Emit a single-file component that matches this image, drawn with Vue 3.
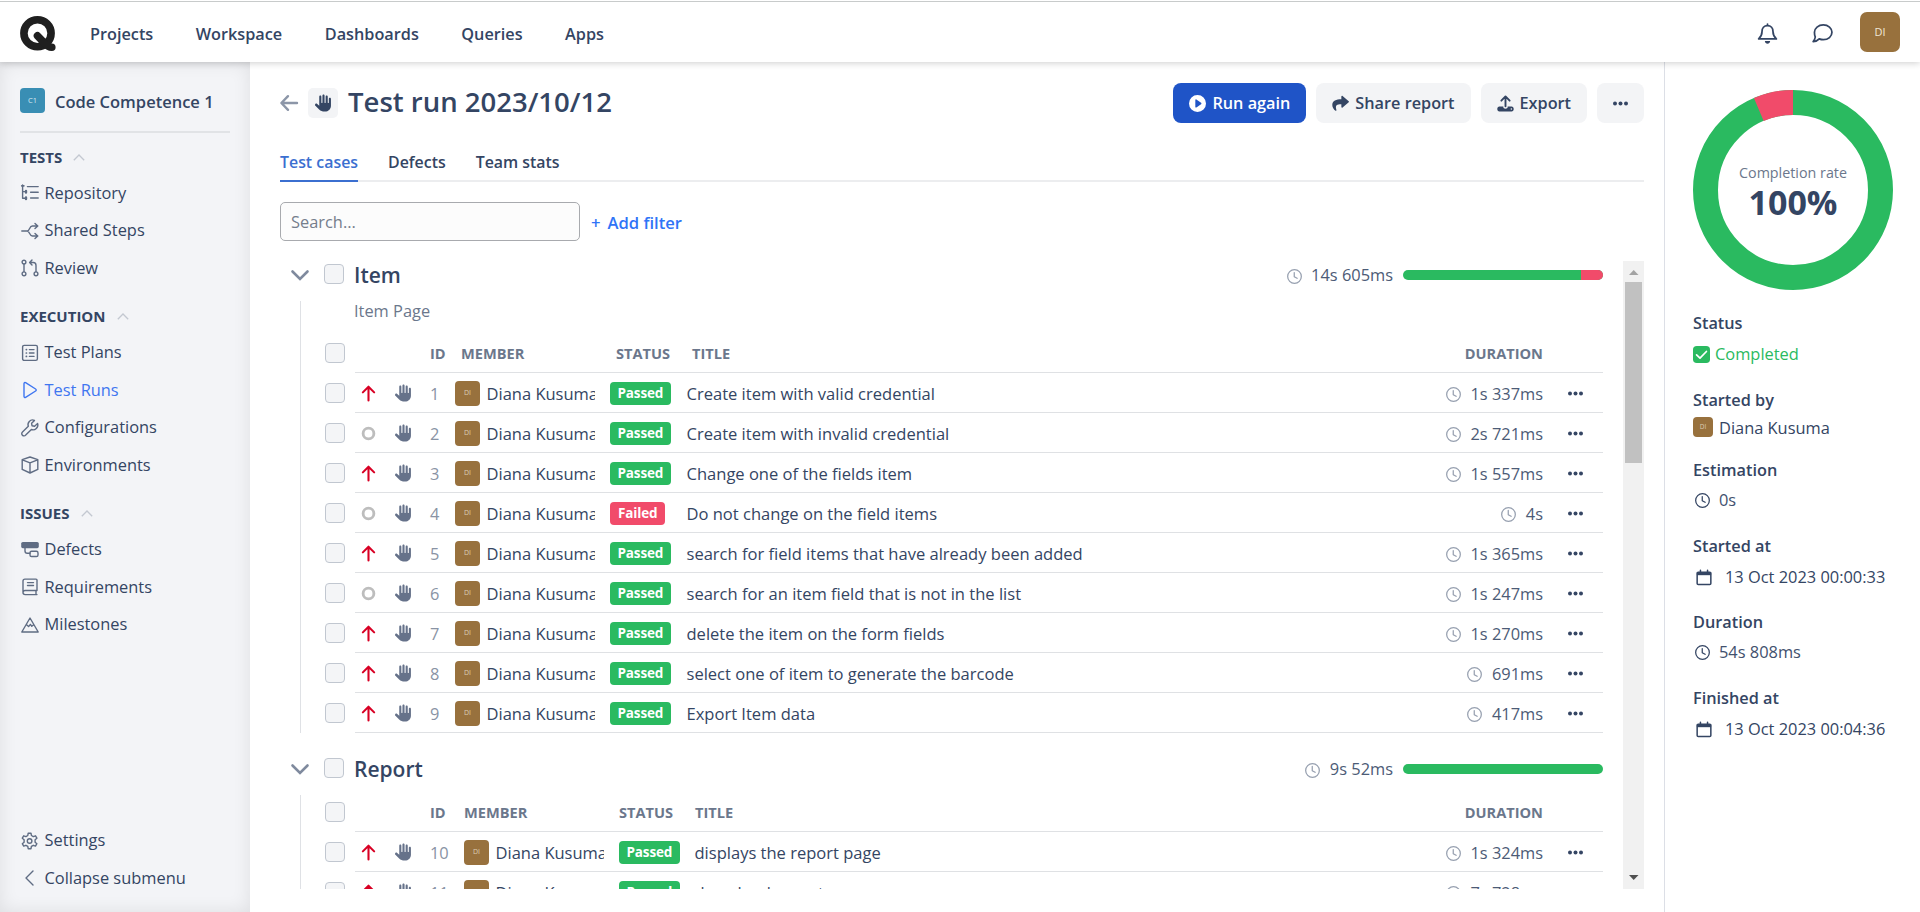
<script setup>
import { h } from 'vue'

const HAND = 'M288 32c0-17.7-14.3-32-32-32s-32 14.3-32 32V240c0 8.8-7.2 16-16 16s-16-7.2-16-16V64c0-17.7-14.3-32-32-32s-32 14.3-32 32V336c0 1.5 0 3.1 .1 4.6L67.6 283c-16-15.2-41.3-14.6-56.6 1.4s-14.6 41.3 1.4 56.6L124.8 448c43.1 41.1 100.4 64 160 64H304c97.2 0 176-78.8 176-176V128c0-17.7-14.3-32-32-32s-32 14.3-32 32V240c0 8.8-7.2 16-16 16s-16-7.2-16-16V64c0-17.7-14.3-32-32-32s-32 14.3-32 32V240c0 8.8-7.2 16-16 16s-16-7.2-16-16V32z'

const line = { fill: 'none', stroke: 'currentColor', 'stroke-width': 1.4, 'stroke-linecap': 'round', 'stroke-linejoin': 'round' }
const p = (d, extra = {}) => h('path', { d, ...line, ...extra })
const solid = (d) => h('path', { d, fill: 'currentColor' })

// Every glyph is drawn on an 18x18 grid.
const glyphs = {
  repository: () => [p('M1.6 1v13.2h3M1.6 7.6h3M6.4 2.6h10.8M9.6 8.3h7.6M9.6 14h7.6'), p('M5 7v1.6M5 13.4v1.6', { 'stroke-width': 2.4 }), p('M.8 1.8h2', { 'stroke-width': 1.8 })],
  shared: () => [p('M.8 9h5.4M6.2 9c2.6 0 2-5 5.2-5h5M6.2 9c2.6 0 2 5 5.2 5h5M14 1.4 16.8 4 14 6.6M14 11.4l2.8 2.6-2.8 2.6')],
  review: () => [p('M3 5.2v7.6M15 12.8V6.4c0-1.800-.9-2.900-2.700-2.900H9M11 1 8.600 3.500 11 6'), h('circle', { cx: 3, cy: 3.1, r: 1.9, ...line }), h('circle', { cx: 3, cy: 14.8, r: 1.9, ...line }), h('circle', { cx: 15, cy: 14.8, r: 1.9, ...line })],
  plans: () => [h('rect', { x: 1.6, y: 1.4, width: 14.8, height: 15, rx: 1.6, ...line }), p('M8.4 5.6h4.6M8.4 9h4.6M8.4 12.4h4.6'), p('M5.3 5.6h.2M5.3 9h.2M5.3 12.4h.2', { 'stroke-width': 1.7 })],
  runs: () => [p('M3 2.7v12.6c0 1 .8 1.4 1.6 1l10-6.3c.8-.5.8-1.5 0-2l-10-6.3C3.800 1.300 3 1.700 3 2.700z')],
  wrench: () => [p('M16.600 4.400 13.600 7.200 11 6.700 10.600 4.300 13.500 1.400C11.700.6 9.600 1 8.300 2.400 7 3.800 6.700 5.700 7.300 7.300L1.500 12.900c-1 1-1 2.400-.1 3.300.9.9 2.400.9 3.300-.1l5.700-5.600c1.600.7 3.500.3 4.900-1.100 1.300-1.300 1.900-3.300 1.300-5z')],
  box: () => [p('M9 1 16.800 3.600v9.800L9 17 1.200 13.400V3.600zM1.400 3.800 9 6.800l7.600-3M9 6.800V17')],
  defects: () => [h('rect', { x: .2, y: 1, width: 17.600, height: 6.200, rx: 1.600, fill: 'currentColor' }), p('M4 7v3c0 1.500.8 2.300 2.300 2.300H9'), h('rect', { x: 9, y: 10.300, width: 8, height: 5.200, rx: 1.600, ...line })],
  book: () => [p('M16 12.500H4.200c-1.300 0-2.200.9-2.200 2.100V3c0-1.100.9-1.900 2-1.900h11c.6 0 1 .4 1 1zM2 14.600c0 1.200.9 2 2.200 2H16M15 12.600v3.900M6.500 4.600h6M6.500 7.500h6')],
  peak: () => [p('M9 2 17.200 16H.8zM5.600 8.800l2 1.800L9.400 8.400l1.400 1.800 1.600-1.200')],
  gear: () => [p('M7.200 3.300 7.600 1h2.800l.4 2.300 1.900 1.100 2.200-.8 1.400 2.400-1.800 1.500v2.500l1.800 1.500-1.400 2.400-2.200-.8-1.900 1.100-.4 2.300H7.600l-.4-2.300-1.900-1.100-2.200.8-1.400-2.400L3.500 10V7.500L1.700 6l1.400-2.400 2.200.8z', { transform: 'translate(-.4 .2)' }), h('circle', { cx: 8.6, cy: 9, r: 2.300, ...line })],
  left: () => [p('M12 2 5 9l7 7')],
  clock: () => [h('circle', { cx: 9, cy: 9, r: 8.2, ...line, 'stroke-width': 1.5 }), p('M8.700 4.200V9.200l3.400 2', { 'stroke-width': 1.5 })],
  calendar: () => [h('rect', { x: 1.300, y: 3, width: 15.400, height: 14, rx: 1.200, ...line, 'stroke-width': 1.700 }), solid('M1 2.800h16v3.600H1z'), p('M5 .8v2.500M13 .8v2.500', { 'stroke-width': 1.700 })],
  hand: () => [h('g', { transform: 'scale(.03516)' }, solid(HAND))],
  up: () => [p('M9 16.500V2M3 7.800 9 1.800l6 6', { 'stroke-width': 2.200 })],
  ring: () => [h('circle', { cx: 9, cy: 9, r: 5.700, ...line, 'stroke-width': 3 })],
  dots: () => [h('circle', { cx: 2.400, cy: 9, r: 2.400, fill: 'currentColor' }), h('circle', { cx: 9, cy: 9, r: 2.400, fill: 'currentColor' }), h('circle', { cx: 15.600, cy: 9, r: 2.400, fill: 'currentColor' })],
  play: () => [h('path', { d: 'M9 0a9 9 0 1 0 0 18A9 9 0 0 0 9 0zM6.700 5.300c0-.6.6-.9 1.100-.6l5 3.500c.5.4.5 1.100 0 1.500l-5 3.500c-.5.300-1.100 0-1.100-.6z', fill: 'currentColor', 'fill-rule': 'evenodd' })],
  share: () => [solid('M11.200 1.100 17.700 6.600c.4.4.4.9 0 1.200L11.200 13.300c-.5.5-1.300.1-1.300-.6V9.900C5.200 9.900 3.100 11 4.700 15.900c.2.600-.5 1-1 .7C1.900 15.300.300 13 .300 10.500.300 5.800 4.500 4.500 9.900 4.400V1.700c0-.7.800-1.100 1.300-.6z')],
  export: () => [p('M9 12V2M4.600 6 9 1.500 13.400 6', { 'stroke-width': 2 }), h('path', { d: 'M2.500 12.300H6.700v.5c0 1 1 1.700 2.300 1.700s2.300-.7 2.300-1.700v-.5h4.200c1.300 0 2.200 1.100 2.200 2.600s-.9 2.500-2.200 2.500h-13C1.200 17.400.300 16.400.300 14.900s.9-2.600 2.200-2.600zM15.200 14.100a.8.800 0 1 0 0 1.600.8.800 0 0 0 0-1.600z', fill: 'currentColor', 'fill-rule': 'evenodd' })],
  back: () => [p('M17 9H2M8 2.200 1.400 9 8 15.800', { 'stroke-width': 2.400 })],
  check: () => [h('rect', { width: 18, height: 18, rx: 4, fill: 'currentColor' }), p('M3.800 9.300l3.600 3.500 6.800-7', { stroke: '#fff', 'stroke-width': 1.800 })],
  bell: () => [p('M9 2.300c-3 0-4.700 2.200-4.700 5 0 3.300-.8 4.500-2.900 6.400h15.200c-2.100-1.900-2.900-3.100-2.900-6.400 0-2.800-1.700-5-4.700-5zM9 .9v1.300', { 'stroke-width': 1.500 }), solid('M6.700 15.400h4.600c-.2 1.500-1.100 2.300-2.300 2.300s-2.100-.8-2.300-2.300z')],
  chat: () => [p('M9.700 1.700c4.200 0 7.400 2.800 7.400 6.300s-3.200 6.300-7.400 6.300c-1.300 0-2.500-.3-3.500-.7C5 14.900 3 15.900 1 15.900c.9-1 1.600-2.200 1.800-3.900C2.200 10.900 2.100 9.500 2.100 8c0-3.500 3.400-6.300 7.600-6.300z', { 'stroke-width': 1.500 })],
}
const Icon = (props) => h('svg', { viewBox: '0 0 18 18', 'aria-hidden': 'true' }, glyphs[props.name]())
Icon.props = ['name']

const nav = ['Projects', 'Workspace', 'Dashboards', 'Queries', 'Apps']
const menu = [
  { title: 'Tests', items: [['repository', 'Repository'], ['shared', 'Shared Steps'], ['review', 'Review']] },
  { title: 'Execution', items: [['plans', 'Test Plans'], ['runs', 'Test Runs'], ['wrench', 'Configurations'], ['box', 'Environments']] },
  { title: 'Issues', items: [['defects', 'Defects'], ['book', 'Requirements'], ['peak', 'Milestones']] },
]
const suites = [
  {
    name: 'Item', note: 'Item Page', time: '14s 605ms', failed: 1, total: 9,
    rows: [
      [1, 'Create item with valid credential', '1s 337ms', true],
      [2, 'Create item with invalid credential', '2s 721ms', false],
      [3, 'Change one of the fields item', '1s 557ms', true],
      [4, 'Do not change on the field items', '4s', false, 'Failed'],
      [5, 'search for field items that have already been added', '1s 365ms', true],
      [6, 'search for an item field that is not in the list', '1s 247ms', false],
      [7, 'delete the item on the form fields', '1s 270ms', true],
      [8, 'select one of item to generate the barcode', '691ms', true],
      [9, 'Export Item data', '417ms', true],
    ],
  },
  {
    name: 'Report', note: '', time: '9s 52ms', failed: 0, total: 7, wide: true,
    rows: [
      [10, 'displays the report page', '1s 324ms', true],
      [11, 'download report', '7s 728ms', true],
    ],
  },
]
</script>

<template>
  <div class="page">
    <header class="top">
      <svg class="logo" viewBox="0 0 36 36">
        <ellipse cx="17.500" cy="17.200" rx="13.600" ry="13.500" fill="none" stroke="#1f1f1f" stroke-width="7.600" />
        <path d="M17.500 19.800 24 26.500Q28 31.200 31.800 31.200" fill="none" stroke="#1f1f1f" stroke-width="7.600" stroke-linecap="round" />
      </svg>
      <nav class="nav"><a v-for="n in nav" :key="n">{{ n }}</a></nav>
      <Icon name="bell" class="bell" />
      <Icon name="chat" class="chat" />
      <span class="me">DI</span>
    </header>

    <div class="body">
      <aside class="side">
        <div class="project"><span class="badge-c">C1</span><span class="pname">Code Competence 1</span></div>
        <div class="rule"></div>
        <section v-for="g in menu" :key="g.title" class="group">
          <h3>{{ g.title }}<svg class="caret" viewBox="0 0 12 7"><path d="M.8 6.300 6 1l5.200 5.300" fill="none" stroke="#c3c8d1" stroke-width="1.300" /></svg></h3>
          <a v-for="i in g.items" :key="i[1]" :class="['item', { on: i[0] === 'runs' }]"><Icon :name="i[0]" class="mi" />{{ i[1] }}</a>
        </section>
        <div class="foot">
          <a class="item"><Icon name="gear" class="mi" />Settings</a>
          <a class="item"><Icon name="left" class="mi" />Collapse submenu</a>
        </div>
      </aside>

      <main class="main">
        <div class="head">
          <Icon name="back" class="back" />
          <span class="kind"><Icon name="hand" class="hand" /></span>
          <h1>Test run 2023/10/12</h1>
          <div class="actions">
            <button class="btn primary"><Icon name="play" />Run again</button>
            <button class="btn"><Icon name="share" />Share report</button>
            <button class="btn"><Icon name="export" />Export</button>
            <button class="btn more"><Icon name="dots" /></button>
          </div>
        </div>
        <div class="tabs"><a class="on">Test cases</a><a>Defects</a><a>Team stats</a></div>
        <div class="filter">
          <div class="search">Search...</div>
          <a class="add"><span>+</span>Add filter</a>
        </div>

        <div class="scroll">
          <div class="list">
            <section v-for="s in suites" :key="s.name" :class="['suite', { wide: s.wide }]">
              <div class="shead">
                <svg class="chev" viewBox="0 0 18 11"><path d="M1.500 1.500 9 9l7.500-7.500" fill="none" stroke="#7f8a9e" stroke-width="2.600" stroke-linecap="round" /></svg>
                <span class="cb"></span>
                <h2>{{ s.name }}</h2>
                <span class="time"><Icon name="clock" class="clock" />{{ s.time }}</span>
                <span class="bar"><i :style="{ width: (s.failed / s.total) * 100 + '%' }"></i></span>
              </div>
              <div class="tree">
                <p v-if="s.note" class="note">{{ s.note }}</p>
                <div class="row cols">
                  <span class="cb"></span>
                  <div class="line"><span class="hid">ID</span><span class="hmem">Member</span><span class="hst">Status</span><span class="htitle">Title</span><span>Duration</span></div>
                </div>
                <div v-for="r in s.rows" :key="r[0]" class="row">
                  <span class="cb"></span>
                  <div class="line">
                    <span class="prio"><Icon :name="r[3] ? 'up' : 'ring'" :class="r[3] ? 'high' : 'none'" /></span>
                    <span class="auto"><Icon name="hand" class="hand" /></span>
                    <span class="id">{{ r[0] }}</span>
                    <span class="ava">DI</span>
                    <span class="who">Diana Kusuma</span>
                    <span class="st"><b :class="{ bad: r[4] }">{{ r[4] || 'Passed' }}</b></span>
                    <span class="title">{{ r[1] }}</span>
                    <span class="time"><Icon name="clock" class="clock" />{{ r[2] }}</span>
                    <Icon name="dots" class="dots" />
                  </div>
                </div>
              </div>
            </section>
          </div>
          <div class="sb">
            <svg viewBox="0 0 21 21"><path d="M6 14h9.500L10.700 9z" fill="#a3a3a3" /></svg>
            <div class="thumb"></div>
            <svg viewBox="0 0 21 21"><path d="M6 7h9.500l-4.800 5z" fill="#505050" /></svg>
          </div>
        </div>
      </main>

      <aside class="info">
        <div class="donut">
          <svg viewBox="0 0 200 200">
            <circle cx="100" cy="100" r="87.500" fill="none" stroke="#2aba60" stroke-width="25" />
            <path d="M65.800 19.460A87.500 87.500 0 0 1 100 12.500" fill="none" stroke="#f14b6a" stroke-width="25" />
          </svg>
          <div class="rate"><span>Completion rate</span><strong>100%</strong></div>
        </div>
        <dl>
          <dt>Status</dt>
          <dd class="done"><Icon name="check" class="ic17" />Completed</dd>
          <dt>Started by</dt>
          <dd class="by"><span class="ava sm">DI</span>Diana Kusuma</dd>
          <dt>Estimation</dt>
          <dd class="dur"><Icon name="clock" class="clock" />0s</dd>
          <dt>Started at</dt>
          <dd class="cal"><Icon name="calendar" class="ic17" />13 Oct 2023 00:00:33</dd>
          <dt>Duration</dt>
          <dd class="dur"><Icon name="clock" class="clock" />54s 808ms</dd>
          <dt>Finished at</dt>
          <dd class="cal"><Icon name="calendar" class="ic17" />13 Oct 2023 00:04:36</dd>
        </dl>
      </aside>
    </div>
  </div>
</template>

<style>
body { background: #fff; overflow: hidden; }
</style>

<style scoped>
.page { height: 912px; display: flex; flex-direction: column; box-sizing: border-box; font: 400 16.4px/1.4 "Open Sans", "Noto Sans", sans-serif; color: #344563; white-space: nowrap; }
.page * { box-sizing: border-box; }
svg { display: block; flex: none; overflow: visible; }
h1, h2, h3, p, dl, dd { margin: 0; }

.top { height: 62px; flex: none; display: flex; align-items: center; padding: 4px 20px 0; border-top: 1px solid #fff; position: relative; z-index: 2; background: #fff; box-shadow: inset 0 1px 0 #c8cbcb, 0 1px 7px rgba(0, 0, 0, .2); }
.logo { width: 36px; height: 36px; }
.nav { display: flex; gap: 42.500px; margin-left: 34px; flex: 1; font-weight: 600; font-size: 16.250px; padding-top: 1px; }
.bell { width: 21px; height: 21px; margin-right: 34px; }
.chat { width: 21px; height: 21px; margin-right: 27px; }
.me { width: 40px; height: 40px; border-radius: 7px; background: #98713d; color: #f0e6d6; font-size: 11px; display: flex; align-items: center; justify-content: center; margin-top: -3px; }

.body { flex: 1; display: flex; min-height: 0; }
.side { width: 250px; flex: none; background: #f3f4f7; box-shadow: inset 0 0 18px rgba(0, 0, 0, .09); padding: 26px 20px 15px; display: flex; flex-direction: column; }
.project { height: 25px; display: flex; align-items: center; font-size: 16.500px; font-weight: 600; }
.pname { padding-top: 2px; }
.badge-c { width: 25px; height: 25px; margin-right: 10px; border-radius: 4px; background: #398eb4; color: #d4e8f0; font-size: 7.500px; font-weight: 400; display: flex; align-items: center; justify-content: center; }
.rule { height: 2px; background: #e1e3e6; margin: 18px 0 7px; }
.group { margin-bottom: 12.400px; }
h3 { height: 34.500px; margin-bottom: -.4px; display: flex; align-items: center; font-size: 15px; line-height: 1.4; font-weight: 700; text-transform: uppercase; }
h3 + .item { margin-top: .2px; }
.caret { width: 12px; height: 7px; margin-left: 11px; }
.item { height: 37.600px; display: flex; align-items: center; }
.mi { width: 18px; height: 18px; margin: 0 6px 0 .5px; color: #5f6c83; }
.item.on, .item.on .mi { color: #3f76f0; }
.foot { margin-top: auto; }

.main { flex: 1; padding: 21px 20px 23px 30px; display: flex; flex-direction: column; min-width: 0; }
.head { display: flex; align-items: center; height: 40px; }
.back { width: 18px; height: 18px; color: #8c96a8; margin-top: -1px; }
.kind { width: 30px; height: 30px; margin-left: 10px; border-radius: 5px; background: #f3f4f6; display: flex; align-items: center; justify-content: center; }
.hand { width: 17px; height: 18px; }
h1 { font-size: 27.500px; line-height: 1.3; font-weight: 600; margin: -3px 0 0 10px; }
.actions { margin-left: auto; display: flex; gap: 10px; }
.btn { height: 40px; border: 0; border-radius: 8px; background: #f3f4f6; color: #344563; font: 600 16.250px/1.4 "Open Sans", "Noto Sans", sans-serif; padding: 1px 16px 0; display: flex; align-items: center; gap: 6px; }
.btn svg { width: 17px; height: 17px; }
.btn.primary { background: #1f54c7; color: #fff; }
.btn.more svg { width: 15px; }
.tabs { display: flex; gap: 30px; height: 39px; margin-top: 20px; border-bottom: 2px solid #ecedef; font-weight: 600; font-size: 15.900px; }
.tabs a { height: 39px; line-height: 38px; border-bottom: 2px solid transparent; }
.tabs .on { color: #3b6fd0; border-color: #3b6fd0; }
.filter { display: flex; align-items: center; margin-top: 20px; }
.search { width: 300px; height: 39px; border: 1px solid #a8aaae; border-radius: 5px; background: #fcfcfc; padding-left: 10px; line-height: 37px; color: #757e8c; }
.add { margin-left: 11px; padding-top: 3px; color: #2f74f7; font-weight: 600; font-size: 16.600px; display: flex; gap: 7px; }

.scroll { margin-top: 20px; height: 628px; overflow: hidden; display: flex; }
.list { flex: 1; margin-right: 20px; }
.suite { margin-bottom: 22px; }
.shead { height: 40px; display: flex; align-items: center; padding: 0 0 14px 11px; }
.chev { width: 18px; height: 11px; margin-right: 15px; margin-top: 2px; }
.cb { width: 20px; height: 20px; border: 1px solid #c1c7d0; border-radius: 4px; background: #f4f5f7; flex: none; }
h2 { font-size: 21px; line-height: 26px; font-weight: 600; margin: 1px 0 0 10px; }
.time { display: flex; align-items: center; color: #4c5b76; margin-left: auto; }
.shead .time { padding-top: 3px; }
.clock { width: 15px; height: 15px; margin: 1px 9.500px 0 0; color: #97a0b0; }
.bar { width: 200px; height: 10px; border-radius: 5px; margin-left: 10px; background: #2aba60; overflow: hidden; display: flex; justify-content: flex-end; margin-top: 1px; }
.bar i { background: #f14b6a; }
.tree { margin-left: 20px; border-left: 1px solid #dfe1e5; }
.note { height: 32px; line-height: 16px; padding: 2px 0 0 53px; color: #6b778c; }
.row { height: 40px; display: flex; padding-left: 24px; }
.row .cb { margin-top: 10px; }
.row .line { flex: 1; margin-left: 10px; border-bottom: 1px solid #dfe1e4; display: flex; align-items: center; }
.row.cols .line { font-size: 14.600px; font-weight: 700; color: #6b778c; text-transform: uppercase; padding: 2px 60px 0 75px; }
.hid { width: 31px; }
.hmem { width: 155px; }
.hst { width: 76px; }
.htitle { flex: 1; }
.wide .hid { width: 34px; }
.wide .cols { height: 37px; }
.wide .cols .cb { margin-top: 7px; }
.wide .row.cols .line { padding-top: 0; padding-bottom: 1px; }
.prio { width: 27px; display: flex; justify-content: center; }
.prio svg { width: 17px; height: 17px; margin-top: 1px; }
.high { color: #d80024; }
.none { color: #bdbdbd; }
.auto { width: 43px; display: flex; justify-content: center; color: #66728a; padding-top: 1px; }
.id { width: 25px; margin-left: 5px; color: #8993a4; padding-top: 3px; }
.wide .id { width: 34px; }
.ava { width: 25px; height: 25px; border-radius: 4px; background: #98713d; color: #dccdb4; font-size: 7px; display: flex; align-items: center; justify-content: center; flex: none; margin-top: 1px; }
.sm { width: 20px; height: 20px; font-size: 6.500px; }
.who { width: 108.500px; margin: 0 15px 0 6.500px; overflow: hidden; font-size: 16.500px; line-height: 26px; padding-top: 3px; }
.st { width: 77px; padding-top: 2px; display: flex; }
.wide .st { width: 76px; }
.st b { height: 23px; line-height: 23.500px; padding: 0 7.500px; border-radius: 4px; background: #2aba60; color: #fff; font-size: 13.500px; font-weight: 700; letter-spacing: -.15px; }
.st .bad { background: #f14b6a; padding: 0 8px; }
.title { padding-top: 3px; font-size: 16.550px; margin-left: -.5px; }
.line .time { padding-top: 3px; }
.dots { width: 15px; height: 15px; margin: 2px 20px 0 25px; }
.sb { width: 21px; background: #f1f1f1; display: flex; flex-direction: column; }
.thumb { height: 181px; margin: 0 2px auto; background: #c1c1c1; }

.info { width: 256px; flex: none; border-left: 1px solid #dcdfe6; padding: 28px 0 0 28px; }
.donut { width: 200px; height: 200px; display: grid; margin-bottom: 23px; }
.donut > * { grid-area: 1 / 1; }
.rate { display: flex; flex-direction: column; align-items: center; justify-content: center; padding-top: 3px; }
.rate span { font-size: 14.300px; color: #6b778c; line-height: 20px; }
.rate strong { font-size: 34px; font-weight: 700; line-height: 38px; }
dt { height: 20px; line-height: 20px; font-weight: 600; font-size: 16.300px; }
dd { display: flex; align-items: center; }
.done { color: #2aba60; height: 42px; margin-bottom: 15px; }
.by { height: 36px; margin-bottom: 14px; }
.by .ava { margin-top: -2px; }
.dur { height: 40px; margin-bottom: 16px; padding-left: 2px; color: #42516e; }
.cal { height: 42px; margin-bottom: 14px; padding-left: 3px; }
.ic17 { width: 17px; height: 17px; margin-right: 5px; }
.cal .ic17 { width: 16px; color: #344563; margin-right: 13px; }
.info .clock { color: #344563; margin-right: 9px; }
.info .ava { margin-right: 6px; }
</style>
